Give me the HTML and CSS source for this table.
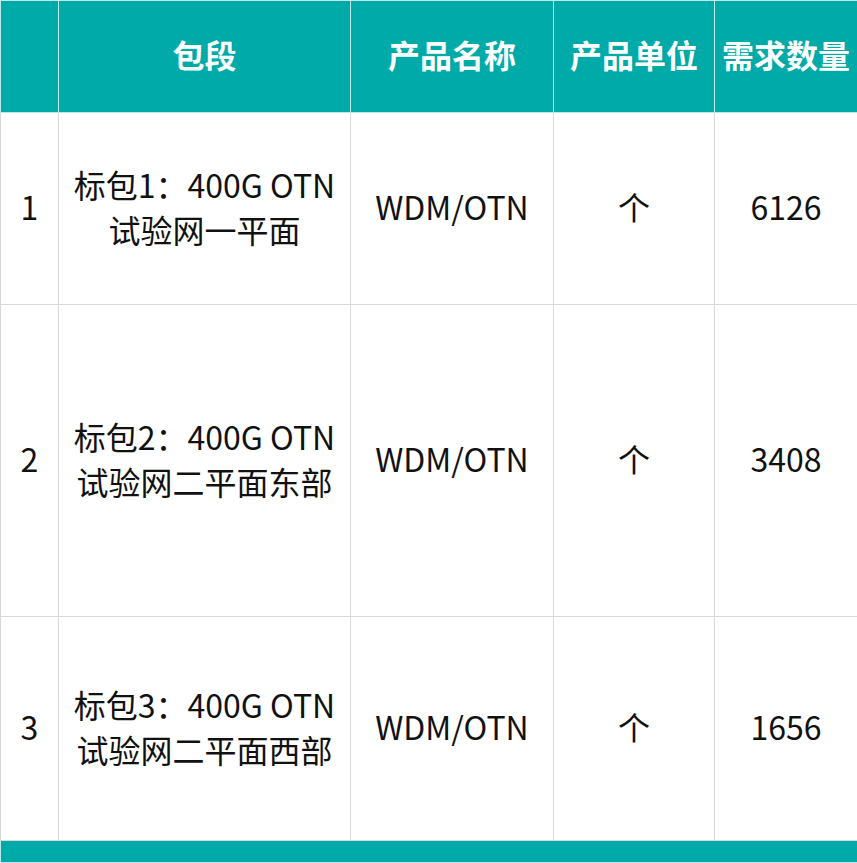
FILE: index.html
```html
<!DOCTYPE html>
<html lang="zh">
<head>
<meta charset="utf-8">
<link rel="stylesheet" href="styles.css">
</head>
<body>
<table class="grid">
  <colgroup>
    <col class="c1"><col class="c2"><col class="c3"><col class="c4"><col class="c5">
  </colgroup>
  <thead>
    <tr class="head">
      <th></th><th>包段</th><th>产品名称</th><th>产品单位</th><th>需求数量</th>
    </tr>
  </thead>
  <tbody>
    <tr class="r1">
      <td>1</td><td>标包1：400G OTN<br>试验网一平面</td><td>WDM/OTN</td><td>个</td><td>6126</td>
    </tr>
    <tr class="r2">
      <td>2</td><td>标包2：400G OTN<br>试验网二平面东部</td><td>WDM/OTN</td><td>个</td><td>3408</td>
    </tr>
    <tr class="r3">
      <td>3</td><td>标包3：400G OTN<br>试验网二平面西部</td><td>WDM/OTN</td><td>个</td><td>1656</td>
    </tr>
  </tbody>
  <tfoot>
    <tr class="foot"><td colspan="5"></td></tr>
  </tfoot>
</table>
</body>
</html>
```
FILE: styles.css
```css
html, body {
  margin: 0;
  padding: 0;
  background: #ffffff;
}
body {
  font-family: "Noto Sans CJK SC", "Noto Sans", sans-serif;
  color: #111111;
}
.grid {
  width: 857px;
  table-layout: fixed;
  border-collapse: collapse;
}
.c1 { width: 58px; }
.c2 { width: 292px; }
.c3 { width: 203px; }
.c4 { width: 161px; }
.c5 { width: 143px; }
.grid th, .grid td {
  padding: 0;
  box-sizing: border-box;
  text-align: center;
  vertical-align: middle;
  border: 1px solid #d9d9d9;
}
.head th {
  height: 112px;
  padding-bottom: 6px;
  background: #00aaa8;
  color: #ffffff;
  font-size: 32px;
  font-weight: 700;
  border-color: #bfe9e8;
}
.grid td {
  font-size: 32px;
  line-height: 45px;
  padding-bottom: 4px;
}
.r1 td { height: 192px; }
.r2 td { height: 312px; }
.r3 td { height: 224px; }
.foot td {
  height: 22px;
  padding: 0;
  background: #00aaa8;
  border-color: #bfe9e8;
}
```
